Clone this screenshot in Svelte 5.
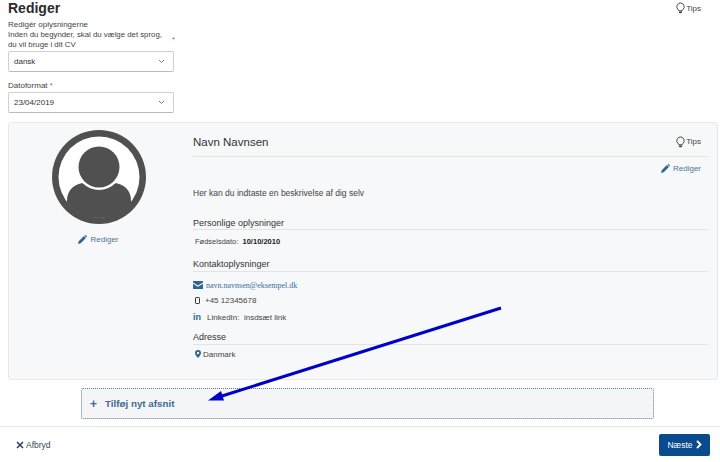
<script lang="ts">
  const selects = [
    { id: "sprog", value: "dansk" },
    { id: "dato", value: "23/04/2019" }
  ];
</script>

{#snippet chevron()}
  <svg class="chev" width="7" height="5" viewBox="0 0 7 5"><path d="M1 1l2.500 2.400L6 1" fill="none" stroke="#777" stroke-width="1" /></svg>
{/snippet}

{#snippet bulb()}
  <svg width="9" height="12" viewBox="0 0 11 14"><path d="M5.500.8a4.600 4.600 0 0 0-3 8c.6.6.9 1 .9 1.600h4.200c0-.6.3-1 .9-1.600a4.600 4.600 0 0 0-3-8z" fill="none" stroke="#444" stroke-width="1.200" /><path d="M3.600 11.200h3.800v1l-1 1.300H4.600l-1-1.300z" fill="#444" /></svg>
{/snippet}

{#snippet pencil()}
  <svg width="9" height="9" viewBox="0 0 10 10"><path d="M0 10l.8-3L6.600 1.200l2.200 2.200L3 9.200zM7.200.6l.5-.4c.3-.2.6-.2.9 0l1.200 1.200c.2.3.2.6 0 .9l-.4.5z" fill="#2f6494" /></svg>
{/snippet}

<div class="page">
  <header class="top">
    <h1>Rediger</h1>
    <span class="tips">{@render bulb()} Tips</span>
  </header>

  <div class="form">
    <div class="label first">
      <div>Redigér oplysningerne</div>
      <div class="wrapped">
        <span>Inden du begynder, skal du vælge det sprog, du vil bruge i dit CV</span>
        <em>*</em>
      </div>
    </div>
    <div class="select">{selects[0].value} {@render chevron()}</div>
    <div class="label second">Datoformat <em>*</em></div>
    <div class="select">{selects[1].value} {@render chevron()}</div>
  </div>

  <section class="card">
    <div class="photo">
      <svg width="94" height="94" viewBox="0 0 94 94">
        <clipPath id="inner"><circle cx="47" cy="47" r="41" /></clipPath>
        <circle cx="47" cy="47" r="47" fill="#505050" />
        <circle cx="47" cy="47" r="40.500" fill="#fff" />
        <path d="M15 94V70c0-10 8-17 18-17h28c10 0 18 7 18 17v24z" fill="#505050" clip-path="url(#inner)" />
        <circle cx="47" cy="37" r="23" fill="#fff" />
        <circle cx="47" cy="37" r="20.500" fill="#505050" />
      </svg>
      <span class="edit">{@render pencil()} Rediger</span>
    </div>

    <div class="info">
      <div class="name-row">
        <h2>Navn Navnsen</h2>
        <span class="tips">{@render bulb()} Tips</span>
      </div>
      <div class="edit-row"><span class="edit">{@render pencil()} Rediger</span></div>
      <p class="about">Her kan du indtaste en beskrivelse af dig selv</p>

      <h3 class="personal">Personlige oplysninger</h3>
      <div class="row birth">Fødselsdato: &nbsp;<b>10/10/2010</b></div>

      <h3 class="contact">Kontaktoplysninger</h3>
      <div class="row mail">
        <svg width="10" height="8" viewBox="0 0 10 8"><path d="M0 0h10v1.400L5 4.400 0 1.400zM0 2.800l5 3 5-3V8H0z" fill="#2f6494" /></svg>
        <span class="email">navn.navnsen@eksempel.dk</span>
      </div>
      <div class="row phone">
        <svg width="5" height="7" viewBox="0 0 5 7"><rect x=".5" y=".5" width="4" height="6" rx=".7" fill="none" stroke="#333" /></svg>
        <span>+45 12345678</span>
      </div>
      <div class="row linked">
        <span class="in">in</span>
        <span>LinkedIn: &nbsp;insdsæt link</span>
      </div>

      <h3 class="address">Adresse</h3>
      <div class="row place">
        <svg width="6" height="8" viewBox="0 0 6 8"><path fill-rule="evenodd" d="M3 0a3 3 0 0 1 3 3c0 1.700-2 3.800-3 5-1-1.200-3-3.300-3-5a3 3 0 0 1 3-3zm0 1.800a1.200 1.200 0 1 0 0 2.400 1.200 1.200 0 0 0 0-2.400z" fill="#2f6494" /></svg>
        <span>Danmark</span>
      </div>
    </div>
  </section>

  <div class="add"><span class="plus">+</span> Tilføj nyt afsnit</div>

  <footer class="bottom">
    <span class="cancel">
      <svg width="8" height="8" viewBox="0 0 8 8"><path d="M1 1l6 6M7 1L1 7" stroke="#2e4a66" stroke-width="1.700" /></svg>
      Afbryd
    </span>
    <span class="next">
      Næste
      <svg width="6" height="9" viewBox="0 0 6 9"><path d="M1 .8l3.500 3.700L1 8.200" fill="none" stroke="#fff" stroke-width="1.900" /></svg>
    </span>
  </footer>

  <svg class="arrow" width="720" height="462" viewBox="0 0 720 462">
    <path d="M501 308L222 396" stroke="#0000c8" stroke-width="3" />
    <path d="M208 400.500L221 391L224 400.500z" fill="#0000c8" />
  </svg>
</div>

<style>
  :global(body) {
    margin: 0;
  }

  .page {
    position: relative;
    width: 720px;
    height: 462px;
    overflow: hidden;
    background: #fff;
    font-family: "Liberation Sans", Arial, sans-serif;
    font-size: 8.5px;
    color: #444;
  }

  .top {
    display: flex;
    justify-content: space-between;
    padding: 0 19px 0 8px;
    height: 20px;
  }

  h1 {
    margin: 0;
    font-size: 14px;
    line-height: 16px;
    color: #2b2b2b;
  }

  .tips {
    display: inline-flex;
    align-items: center;
    gap: 1px;
    font-size: 8px;
    color: #444;
  }

  .top .tips {
    height: 16px;
  }

  .form {
    width: 166px;
    margin-left: 8px;
  }

  .label {
    font-size: 8px;
    line-height: 10px;
    color: #444;
  }

  .label.first {
    margin-bottom: 1px;
  }

  .wrapped {
    display: flex;
    gap: 6px;
    align-items: center;
    width: 170px;
  }

  .wrapped span {
    width: 158px;
    font-size: 7.800px;
  }

  .label em {
    font-style: normal;
    color: #d9534f;
  }

  .label.second {
    margin-top: 9px;
    margin-bottom: 1px;
  }

  .select {
    display: flex;
    justify-content: space-between;
    align-items: center;
    box-sizing: border-box;
    height: 21px;
    padding: 0 8px 0 5px;
    background: #fff;
    border: 1px solid #d0d0d0;
    border-bottom-color: #bbb;
    border-radius: 2px;
    font-size: 8px;
    color: #333;
  }

  .card {
    display: flex;
    box-sizing: border-box;
    width: 710px;
    height: 258px;
    margin: 9px 0 0 8px;
    background: #f6f8f9;
    border: 1px solid #e6e8ea;
    border-radius: 3px;
  }

  .photo {
    display: flex;
    flex-direction: column;
    align-items: center;
    width: 179px;
    padding-top: 7px;
    flex: none;
  }

  .photo .edit {
    margin-top: 11px;
  }

  .edit {
    display: inline-flex;
    align-items: center;
    gap: 3px;
    font-size: 8px;
    color: #4f7497;
  }

  .info {
    flex: 1;
    margin: 0 9px 0 5px;
  }

  .name-row {
    display: flex;
    justify-content: space-between;
    align-items: center;
    box-sizing: border-box;
    height: 34px;
    padding: 4px 7px 0 0;
    border-bottom: 1px solid #e2e8d8;
  }

  h2 {
    margin: 0;
    font-size: 11.500px;
    font-weight: 400;
    color: #333;
  }

  .edit-row {
    display: flex;
    justify-content: flex-end;
    height: 10px;
    margin-top: 6px;
    padding-right: 7px;
  }

  .about {
    margin: 15px 0 0;
    line-height: 10px;
  }

  h3 {
    margin: 0;
    font-size: 9px;
    line-height: 12px;
    font-weight: 400;
    color: #333;
    border-bottom: 1px solid #e1e3e5;
  }

  h3.personal {
    margin-top: 19px;
  }

  h3.contact {
    margin-top: 11px;
    padding-bottom: 1px;
  }

  h3.address {
    margin-top: 9px;
    padding-bottom: 1px;
  }

  .row {
    display: flex;
    align-items: center;
    gap: 3px;
    height: 10px;
    font-size: 8px;
  }

  .birth {
    display: block;
    margin-top: 7px;
    padding-left: 2px;
    font-size: 7.500px;
    line-height: 10px;
  }

  .birth b {
    color: #222;
  }

  .mail {
    margin-top: 8px;
  }

  .email {
    font-family: "Liberation Serif", serif;
    font-size: 8px;
    color: #3b6ea5;
  }

  .phone {
    margin-top: 5px;
    padding-left: 2px;
    gap: 5px;
  }

  .linked {
    margin-top: 7px;
    gap: 6px;
  }

  .in {
    font-weight: 700;
    font-size: 9px;
    color: #2f6494;
  }

  .place {
    margin-top: 4px;
    padding-left: 2px;
    gap: 2px;
  }

  .add {
    display: flex;
    align-items: center;
    box-sizing: border-box;
    width: 573px;
    height: 31px;
    margin: 8px 0 0 81px;
    padding-left: 8px;
    background: #f4f5f6;
    border: 1px dotted #5c7f9c;
    border-radius: 2px;
    font-size: 9.800px;
    font-weight: 700;
    color: #3f6a92;
  }

  .plus {
    width: 15px;
    font-size: 12px;
  }

  .bottom {
    display: flex;
    justify-content: space-between;
    align-items: center;
    height: 35px;
    margin-top: 7px;
    padding: 0 10px 0 16px;
    border-top: 1px solid #e3e5e8;
  }

  .cancel {
    display: inline-flex;
    align-items: center;
    gap: 2px;
    color: #33475a;
  }

  .next {
    display: inline-flex;
    justify-content: center;
    align-items: center;
    gap: 3px;
    box-sizing: border-box;
    width: 51px;
    height: 22px;
    background: #0a4a8f;
    border-radius: 2px;
    color: #fff;
  }

  .arrow {
    position: absolute;
    top: 0;
    left: 0;
    pointer-events: none;
  }
</style>
